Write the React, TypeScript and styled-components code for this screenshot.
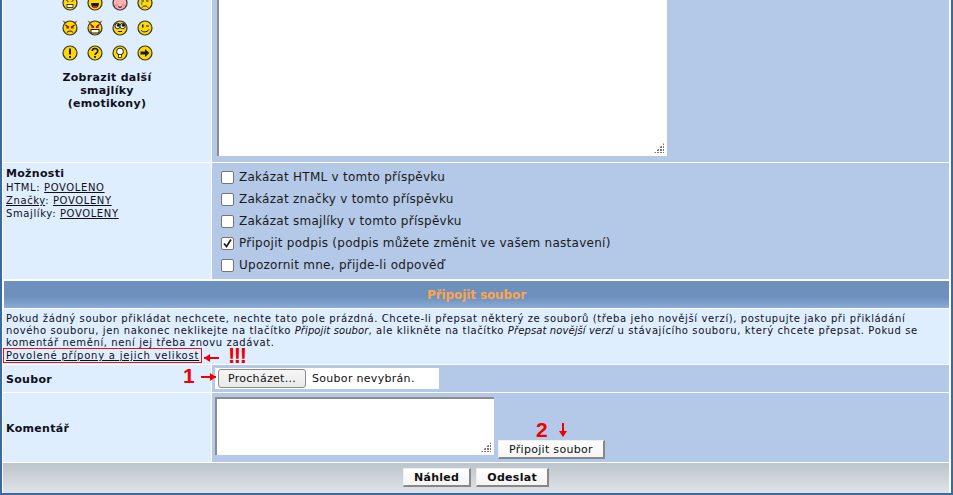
import React from 'react';
import styled, { createGlobalStyle } from 'styled-components';

const GlobalStyle = createGlobalStyle`
  html, body {
    margin: 0;
    padding: 0;
    background: #ffffff;
  }
  body {
    font-family: "DejaVu Sans", Verdana, sans-serif;
    color: #000000;
  }
`;

type FaceKind =
  | 'grim' | 'tongue' | 'pink' | 'sad'
  | 'evil' | 'devil' | 'roll' | 'wink'
  | 'excl' | 'ques' | 'idea' | 'arrow';

const FACES: FaceKind[] = [
  'grim', 'tongue', 'pink', 'sad',
  'evil', 'devil', 'roll', 'wink',
  'excl', 'ques', 'idea', 'arrow',
];

function FaceInner({ kind }: { kind: FaceKind }) {
  const ink = '#1c1c1c';
  switch (kind) {
    case 'grim':
      return (
        <>
          <path d="M4.500 5.500l2 1M11.500 5.500l-2 1" stroke={ink} fill="none" />
          <rect x="5" y="9.500" width="6" height="3" fill="#fff" stroke={ink} strokeWidth="0.8" />
        </>
      );
    case 'tongue':
      return (
        <>
          <path d="M4 8h8c0 3-1.500 5-4 5s-4-2-4-5z" fill={ink} />
          <path d="M6 11h4v1.600c-1 .6-3 .6-4 0z" fill="#e22" />
        </>
      );
    case 'pink':
      return (
        <>
          <circle cx="4.500" cy="10" r="1.600" fill="#f88" />
          <circle cx="11.500" cy="10" r="1.600" fill="#f88" />
          <path d="M6 11.500c1 1 3 1 4 0" stroke={ink} fill="none" />
        </>
      );
    case 'sad':
      return (
        <>
          <path d="M4.500 6h2.500M9 6h2.500" stroke={ink} fill="none" />
          <path d="M5 12.500c1.500-2 4.500-2 6 0" stroke={ink} fill="none" />
          <rect x="4" y="7" width="1.400" height="3" fill="#39f" />
        </>
      );
    case 'evil':
      return (
        <>
          <path d="M3.500 5l3.500 2.500M12.500 5L9 7.500" stroke={ink} strokeWidth="1.200" />
          <rect x="4.500" y="6.500" width="2.400" height="2" fill="#d00" />
          <rect x="9.100" y="6.500" width="2.400" height="2" fill="#d00" />
          <path d="M5 12.500c1.500-2 4.500-2 6 0" stroke={ink} strokeWidth="1.200" fill="none" />
        </>
      );
    case 'devil':
      return (
        <>
          <path d="M3.500 4.500l3.500 2.500M12.500 4.500L9 7" stroke={ink} strokeWidth="1.200" />
          <rect x="4.500" y="6" width="2.400" height="2" fill="#d00" />
          <rect x="9.100" y="6" width="2.400" height="2" fill="#d00" />
          <rect x="4" y="9.500" width="8" height="3.500" fill="#fff" stroke={ink} />
        </>
      );
    case 'roll':
      return (
        <>
          <circle cx="5.600" cy="6" r="2.700" fill="#fff" stroke={ink} />
          <circle cx="10.600" cy="6" r="2.700" fill="#fff" stroke={ink} />
          <circle cx="6.300" cy="5.300" r="1.500" fill={ink} />
          <circle cx="11.200" cy="5.300" r="1.500" fill={ink} />
          <path d="M6 11.500h4" stroke={ink} />
        </>
      );
    case 'wink':
      return (
        <>
          <rect x="5" y="4.500" width="1.500" height="3" fill={ink} />
          <path d="M9 6h3" stroke={ink} />
          <path d="M4 10c1.500 2.600 6 2.600 8-.5" stroke={ink} fill="none" />
        </>
      );
    case 'excl':
      return (
        <>
          <rect x="7" y="3.500" width="2" height="6" fill={ink} />
          <rect x="7" y="11" width="2" height="1.800" fill={ink} />
        </>
      );
    case 'ques':
      return (
        <>
          <path d="M5.200 6c0-3.400 5.600-3.400 5.600 0 0 2.200-2.800 2.200-2.800 4" stroke={ink} strokeWidth="1.600" fill="none" />
          <rect x="7.100" y="11" width="1.800" height="1.800" fill={ink} />
        </>
      );
    case 'idea':
      return (
        <>
          <circle cx="8" cy="6.500" r="3.400" fill="#fff" stroke={ink} />
          <rect x="6.500" y="9.500" width="3" height="3" fill="#fff" stroke={ink} strokeWidth="0.8" />
        </>
      );
    case 'arrow':
      return <path d="M3.500 6.500h4.500V4l4.500 4-4.500 4V9.500H3.500z" fill={ink} />;
  }
}

function Face({ kind }: { kind: FaceKind }) {
  const horned = kind === 'evil' || kind === 'devil';
  const fill = kind === 'pink' ? '#ffb0b0' : '#ffd800';
  return (
    <svg width="16" height="16" viewBox="0 0 16 16" aria-hidden="true">
      {horned && <path d="M.5.500l3 4.500 2-2.500zM15.500.500l-3 4.500-2-2.500z" fill="#b5562a" />}
      <circle cx="8" cy="8" r="7" fill={fill} stroke="#333" strokeWidth="1.200" />
      <FaceInner kind={kind} />
    </svg>
  );
}

function App() {
  return (
    <>
      <GlobalStyle />
      <Page>
        <Row $height={162}>
          <LeftCell>
            <FaceGrid>
              {FACES.map((f) => (
                <Face key={f} kind={f} />
              ))}
            </FaceGrid>
            <MoreFaces>
              Zobrazit další
              <br />
              smajlíky
              <br />
              (emotikony)
            </MoreFaces>
          </LeftCell>
          <RightCell>
            <MessageBox>
              <Grip />
            </MessageBox>
          </RightCell>
        </Row>

        <Row $height={116} $spaced>
          <LeftCell $pad>
            <Label>Možnosti</Label>
            <Note>
              HTML: <u>POVOLENO</u>
              <br />
              <u>Značky</u>: <u>POVOLENY</u>
              <br />
              Smajlíky: <u>POVOLENY</u>
            </Note>
          </LeftCell>
          <OptionsCell>
            <Option>
              <CheckBox />
              Zakázat HTML v tomto příspěvku
            </Option>
            <Option>
              <CheckBox />
              Zakázat značky v tomto příspěvku
            </Option>
            <Option>
              <CheckBox />
              Zakázat smajlíky v tomto příspěvku
            </Option>
            <Option>
              <CheckBox>
                <svg width="11" height="11" viewBox="0 0 11 11" aria-hidden="true">
                  <path d="M2 5.500l2.500 3L9 1.500" stroke="#222" strokeWidth="1.800" fill="none" />
                </svg>
              </CheckBox>
              Připojit podpis (podpis můžete změnit ve vašem nastavení)
            </Option>
            <Option>
              <CheckBox />
              Upozornit mne, přijde-li odpověď
            </Option>
          </OptionsCell>
        </Row>

        <SectionHeader>Připojit soubor</SectionHeader>

        <InfoRow>
          <InfoText>
            Pokud žádný soubor přikládat nechcete, nechte tato pole prázdná. Chcete-li přepsat některý ze
            souborů (třeba jeho novější verzí), postupujte jako při přikládání nového souboru, jen nakonec
            neklikejte na tlačítko <Term>Připojit soubor</Term>, ale klikněte na tlačítko{' '}
            <Term>Přepsat novější verzí</Term> u stávajícího souboru, který chcete přepsat. Pokud se komentář
            nemění, není jej třeba znovu zadávat.
          </InfoText>
          <LimitLink>Povolené přípony a jejich velikost</LimitLink>
          <HorizontalArrow $left={204} $top={48} $dir="left" />
          <Shout>!!!</Shout>
        </InfoRow>

        <Row $height={27}>
          <LeftCell $pad $center>
            <Label>Soubor</Label>
            <StepNumber $left={180} $top={0}>1</StepNumber>
            <HorizontalArrow $left={201} $top={11} $dir="right" />
          </LeftCell>
          <FileCell>
            <FileBox>
              <BrowseButton>Procházet...</BrowseButton>
              <FileName>Soubor nevybrán.</FileName>
            </FileBox>
          </FileCell>
        </Row>

        <Row $height={69}>
          <LeftCell $pad $center>
            <Label>Komentář</Label>
          </LeftCell>
          <CommentCell>
            <CommentBox>
              <Grip />
            </CommentBox>
            <AttachWrap>
              <StepNumber $left={38} $top={-21}>2</StepNumber>
              <DownArrow />
              <GreyButton>Připojit soubor</GreyButton>
            </AttachWrap>
          </CommentCell>
        </Row>

        <Footer>
          <GreyButton $bold>Náhled</GreyButton>
          <GreyButton $bold>Odeslat</GreyButton>
        </Footer>
      </Page>
    </>
  );
}

export default App;

const Page = styled.div`
  width: 953px;
  height: 495px;
  box-sizing: border-box;
  overflow: hidden;
  display: flex;
  flex-direction: column;
  gap: 1px;
  background: #ffffff;
  border-left: 2px solid #3a6a9e;
  border-right: 2px solid #3a6a9e;
  border-bottom: 2px solid #3a6a9e;
  padding: 0 2px 0 1px;
`;

const Row = styled.div<{ $height: number; $spaced?: boolean }>`
  display: flex;
  height: ${({ $height }) => $height}px;
  flex: none;
  gap: 1px;
  overflow: hidden;
  ${({ $spaced }) => $spaced && 'margin-bottom: 1px;'}
`;

const LeftCell = styled.div<{ $pad?: boolean; $center?: boolean }>`
  position: relative;
  width: 208px;
  flex: none;
  box-sizing: border-box;
  background: #deeefe;
  padding: ${({ $pad }) => ($pad ? '3px 3px' : '0')};
  ${({ $center }) => $center && 'display: flex; align-items: center; padding-top: 4px;'}
`;

const RightCell = styled.div`
  flex: 1;
  background: #b4c9e7;
  padding-left: 5px;
`;

const FaceGrid = styled.div`
  display: grid;
  grid-template-columns: repeat(4, 16px);
  grid-auto-rows: 16px;
  gap: 9px;
  justify-content: center;
  margin-top: -5px;
`;

const MoreFaces = styled.div`
  margin-top: 10px;
  font-size: 11px;
  font-weight: bold;
  letter-spacing: 0.3px;
  line-height: 13px;
  text-align: center;
  color: #10101a;
`;

const MessageBox = styled.div`
  position: relative;
  width: 450px;
  height: 156px;
  box-sizing: border-box;
  background: #ffffff;
  border-left: 2px solid #8c8c8c;
`;

const Grip = styled.div`
  position: absolute;
  right: 3px;
  bottom: 3px;
  width: 10px;
  height: 10px;
  background-image: radial-gradient(circle at 1px 1px, #777 0.8px, transparent 1px);
  background-size: 3px 3px;
  clip-path: polygon(100% 0, 100% 100%, 0 100%);
`;

const Label = styled.div`
  font-size: 11px;
  font-weight: bold;
  letter-spacing: 0.3px;
  line-height: 15px;
  color: #10101a;
`;

const Note = styled.div`
  font-size: 10px;
  line-height: 13px;
  color: #10101a;
  letter-spacing: 0.62px;
`;

const OptionsCell = styled.div`
  flex: 1;
  display: flex;
  flex-direction: column;
  background: #b4c9e7;
  padding: 3px 0 0 9px;
`;

const Option = styled.label`
  display: flex;
  align-items: center;
  gap: 5px;
  height: 22px;
  font-size: 12px;
  letter-spacing: 0.27px;
  color: #1a1a1a;
`;

const CheckBox = styled.span`
  display: flex;
  align-items: center;
  justify-content: center;
  width: 13px;
  height: 13px;
  box-sizing: border-box;
  background: #ffffff;
  border: 1px solid #767676;
  border-radius: 2px;
`;

const SectionHeader = styled.div`
  height: 27px;
  flex: none;
  margin-left: 1px;
  display: flex;
  align-items: center;
  justify-content: center;
  font-size: 12px;
  font-weight: bold;
  letter-spacing: -0.1px;
  color: #ffa34d;
  background: linear-gradient(to bottom, #6d90bd 0%, #6d90bd 60%, #8cacd8 100%);
`;

const InfoRow = styled.div`
  position: relative;
  height: 55px;
  flex: none;
  box-sizing: border-box;
  padding-top: 4px;
  background: #deeefe;
`;

const InfoText = styled.div`
  font-size: 10px;
  line-height: 12px;
  letter-spacing: 0.61px;
  color: #10101a;
  width: 935px;
  margin-left: 3px;
`;

const Term = styled.i`
  letter-spacing: 0.1px;
`;

const LimitLink = styled.div`
  display: inline-block;
  vertical-align: top;
  margin-top: -1px;
  padding: 0 2px;
  border: 1px solid #ee1111;
  font-size: 10px;
  line-height: 13px;
  letter-spacing: 0.78px;
  text-decoration: underline;
  color: #10101a;
`;

const Shout = styled.span`
  position: absolute;
  left: 225px;
  top: 36px;
  font-family: "Liberation Sans", Arial, sans-serif;
  font-size: 22px;
  line-height: 22px;
  font-weight: bold;
  letter-spacing: -1.5px;
  color: #f00000;
`;

const HorizontalArrow = styled.span<{ $left: number; $top: number; $dir: 'left' | 'right' }>`
  position: absolute;
  left: ${({ $left }) => $left - 3}px;
  top: ${({ $top }) => $top}px;
  width: 15px;
  height: 2px;
  background: #f00000;
  &::after {
    content: '';
    position: absolute;
    top: -3px;
    ${({ $dir }) => ($dir === 'left' ? 'left: 0;' : 'right: 0;')}
    width: 0;
    height: 0;
    border-top: 4px solid transparent;
    border-bottom: 4px solid transparent;
    ${({ $dir }) =>
      $dir === 'left' ? 'border-right: 6px solid #f00000;' : 'border-left: 6px solid #f00000;'}
  }
`;

const StepNumber = styled.span<{ $left: number; $top: number }>`
  position: absolute;
  left: ${({ $left }) => $left}px;
  top: ${({ $top }) => $top}px;
  font-family: "Liberation Sans", Arial, sans-serif;
  font-size: 21px;
  line-height: 22px;
  font-weight: bold;
  color: #f00000;
`;

const FileCell = styled.div`
  flex: 1;
  background: #b4c9e7;
  padding: 3px 0 0 3px;
`;

const FileBox = styled.div`
  display: flex;
  align-items: center;
  width: 224px;
  height: 21px;
  background: #ffffff;
  padding-left: 3px;
  box-sizing: border-box;
`;

const BrowseButton = styled.button`
  width: 88px;
  height: 19px;
  padding: 0;
  font-family: inherit;
  font-size: 11px;
  letter-spacing: 0.3px;
  color: #111;
  background: linear-gradient(to bottom, #f6f6f6 0%, #e9e9e9 100%);
  border: 1px solid #8a8a8a;
  border-radius: 3px;
`;

const FileName = styled.span`
  margin-left: 6px;
  font-size: 11px;
  letter-spacing: 0.3px;
  color: #111;
`;

const CommentCell = styled.div`
  flex: 1;
  display: flex;
  background: #b4c9e7;
  padding: 4px 0 0 3px;
`;

const CommentBox = styled.div`
  position: relative;
  width: 279px;
  height: 58px;
  box-sizing: border-box;
  background: #ffffff;
  border-top: 2px solid #8c8c8c;
  border-left: 2px solid #8c8c8c;
`;

const AttachWrap = styled.div`
  position: relative;
  display: flex;
  align-items: flex-start;
  margin: 43px 0 0 4px;
`;

const DownArrow = styled.span`
  position: absolute;
  left: 64px;
  top: -17px;
  width: 2px;
  height: 13px;
  background: #f00000;
  &::after {
    content: '';
    position: absolute;
    left: -3px;
    bottom: -1px;
    border-left: 4px solid transparent;
    border-right: 4px solid transparent;
    border-top: 6px solid #f00000;
  }
`;

const GreyButton = styled.button<{ $bold?: boolean }>`
  display: block;
  height: 19px;
  box-sizing: border-box;
  padding: 0 10px;
  font-family: inherit;
  font-size: 11px;
  letter-spacing: 0.3px;
  font-weight: ${({ $bold }) => ($bold ? 'bold' : 'normal')};
  color: #111;
  background: linear-gradient(to bottom, #ffffff 0%, #f4f4f4 100%);
  border: 0;
  border-top: 1px solid #eeeeee;
  border-left: 1px solid #eeeeee;
  border-right: 2px solid #888888;
  border-bottom: 2px solid #888888;
`;

const Footer = styled.div`
  height: 30px;
  flex: none;
  display: flex;
  justify-content: center;
  align-items: flex-start;
  gap: 5px;
  padding: 5px 0 0;
  box-sizing: border-box;
  background: linear-gradient(to bottom, #bcc5cc 0%, #dfe3e6 100%);
`;
